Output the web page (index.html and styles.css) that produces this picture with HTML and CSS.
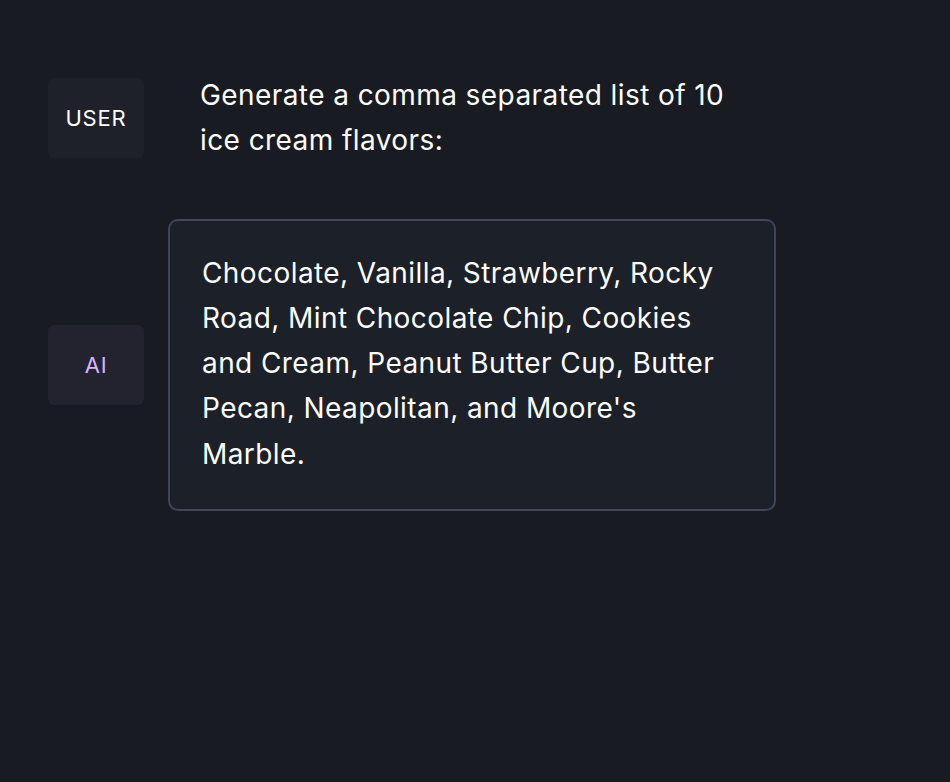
FILE: index.html
```html
<!DOCTYPE html>
<html>
<head>
<meta charset="utf-8">
<link rel="stylesheet" href="styles.css">
</head>
<body>
<div class="chat">
  <div class="row">
    <div class="label label-user">USER</div>
    <div class="msg msg-user">Generate a comma separated list of 10 ice cream flavors:</div>
  </div>
  <div class="row">
    <div class="label label-ai">AI</div>
    <div class="msg msg-ai">Chocolate, Vanilla, Strawberry, Rocky Road, Mint Chocolate Chip, Cookies and Cream, Peanut Butter Cup, Butter Pecan, Neapolitan, and Moore's Marble.</div>
  </div>
</div>
</body>
</html>
```
FILE: styles.css
```css
html, body {
  margin: 0;
  height: 100%;
  background: #181b22;
}
body {
  font-family: Inter, "Noto Sans", sans-serif;
  color: #ffffff;
}
.chat {
  display: flex;
  flex-direction: column;
  gap: 23px;
  padding: 41px 48px;
}
.row {
  display: flex;
  align-items: center;
  gap: 24px;
}
.label {
  flex: none;
  width: 96px;
  height: 80px;
  border-radius: 6px;
  display: flex;
  align-items: center;
  justify-content: center;
  font-size: 22px;
  letter-spacing: 0.8px;
}
.label-user {
  background: #1e2129;
  color: #ffffff;
}
.label-ai {
  background: #22232f;
  color: #d8b4fe;
}
.msg {
  box-sizing: border-box;
  width: 608px;
  padding: 32px;
  font-size: 28px;
  line-height: 45.3px;
  letter-spacing: 0.42px;
}
.msg-ai {
  background: #1c2028;
  border: 2px solid #45435c;
  border-radius: 10px;
  padding: 30px 32px 32px;
}
```
